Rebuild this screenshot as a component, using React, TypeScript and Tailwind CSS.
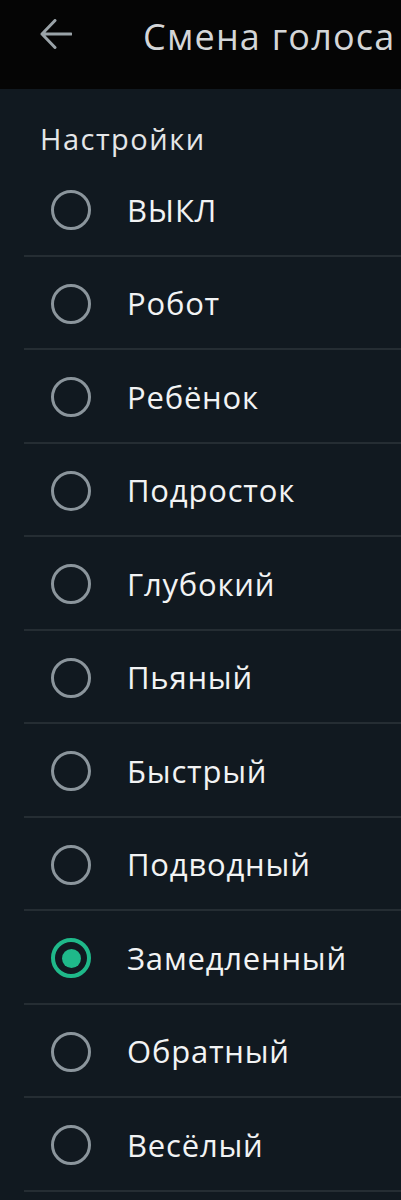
import React from "react";

const items = [
  "ВЫКЛ",
  "Робот",
  "Ребёнок",
  "Подросток",
  "Глубокий",
  "Пьяный",
  "Быстрый",
  "Подводный",
  "Замедленный",
  "Обратный",
  "Весёлый",
];

export default function App() {
  const selected = 8;
  return (
    <div
      className="w-[401px] h-[1200px] overflow-hidden bg-[#111920]"
      style={{ fontFamily: "'Open Sans', 'Noto Sans', sans-serif" }}
    >
      <div className="h-[89px] bg-[#050505] flex items-center">
        <div className="w-[143px] pl-[40px] pb-[22px] flex items-center">
          <svg width="32" height="30" viewBox="0 0 32 30" fill="none">
            <path
              d="M31 15H2M15 1.5L2 15L15 28.5"
              stroke="#9aa3a8"
              strokeWidth="3"
              strokeLinecap="round"
              strokeLinejoin="round"
            />
          </svg>
        </div>
        <div className="text-[36px] tracking-[1.2px] leading-none text-[#d4d6d8] whitespace-nowrap pb-[16px]">
          Смена голоса
        </div>
      </div>
      <div className="pl-[40px] pt-[32px] pb-[6px] text-[29px] tracking-[1.5px] leading-[36px] text-[#e4e6e8]">
        Настройки
      </div>
      <div className="pl-[24px]">
        {items.map((t, i) => (
          <div
            key={t}
            className="h-[93.5px] pt-[3px] flex items-center border-b-2 border-[#252d33]"
          >
            <div className="w-[103px] pl-[27px] flex items-center">
              {i === selected ? (
                <div className="w-[40px] h-[40px] rounded-full border-[4px] border-[#1fb98a] flex items-center justify-center">
                  <div className="w-[19px] h-[19px] rounded-full bg-[#1fb98a]" />
                </div>
              ) : (
                <div className="w-[40px] h-[40px] rounded-full border-[3.5px] border-[#8b959c]" />
              )}
            </div>
            <div className="text-[31px] tracking-[0.8px] text-[#f2f3f4] leading-none">{t}</div>
          </div>
        ))}
      </div>
    </div>
  );
}
